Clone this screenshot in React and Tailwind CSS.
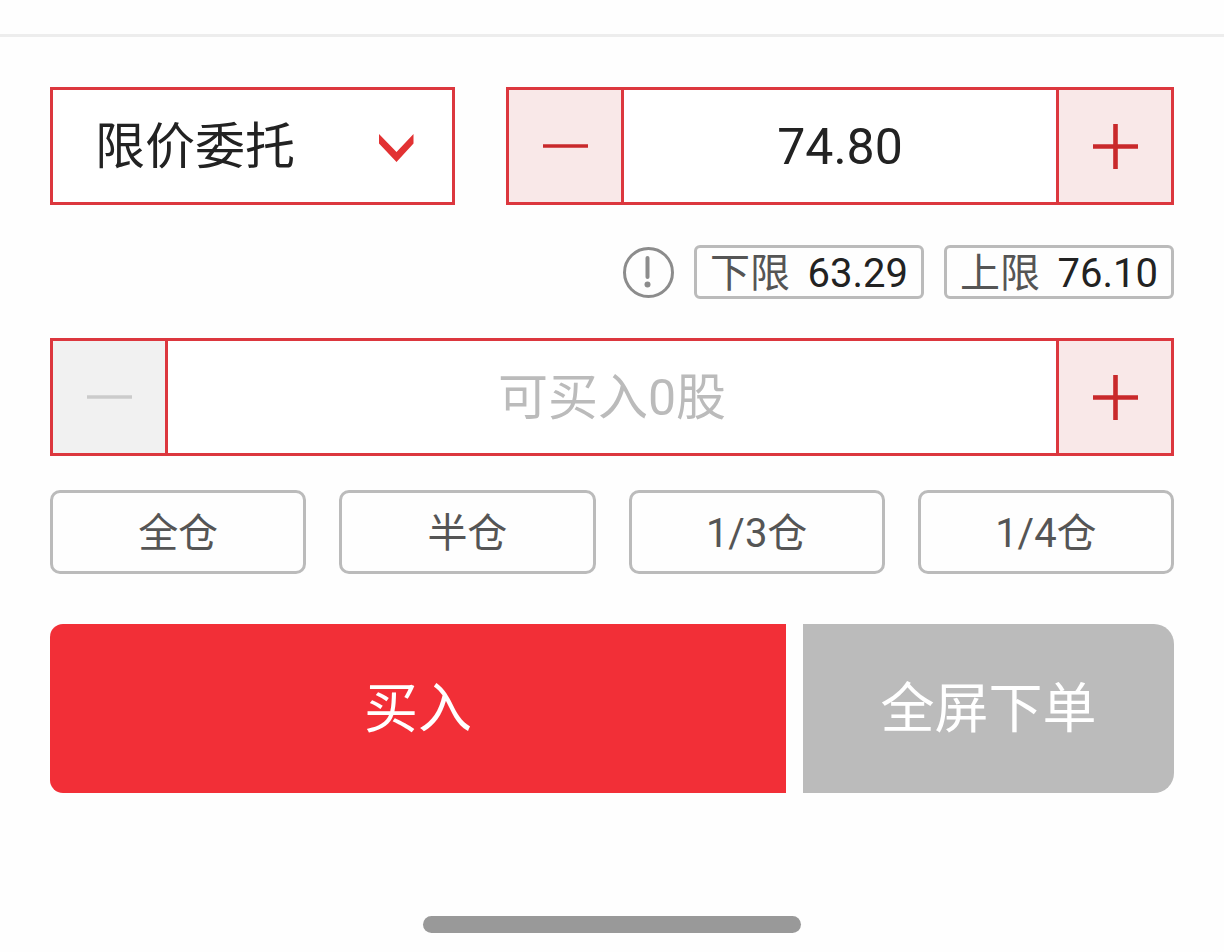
import React, { useState } from 'react';

const fractions = ['全仓', '半仓', '1/3仓', '1/4仓'];

const MinusIcon = () => (
  <svg width="45" height="45" viewBox="0 0 45 45" aria-hidden="true">
    <path d="M0 22h45" stroke="currentColor" strokeWidth="3.6" />
  </svg>
);

const PlusIcon = () => (
  <svg width="45" height="45" viewBox="0 0 45 45" aria-hidden="true">
    <path d="M0 22.5h45M22.5 0v45" stroke="currentColor" strokeWidth="4.6" />
  </svg>
);

const Stepper = ({ label, value, placeholder, onChange, onStep, minusDisabled }) => (
  <div className="flex h-[118px] min-w-0 border-3 border-[#dc373e] bg-white">
    <button
      type="button"
      aria-label={`${label}减少`}
      disabled={minusDisabled}
      onClick={() => onStep(-1)}
      className="flex w-[115px] shrink-0 items-center justify-center border-r-3 border-[#dc373e] bg-[#f9e8e8] text-[#c9292b] disabled:bg-[#f1f1f1] disabled:text-[#cbcbcb]"
    >
      <MinusIcon />
    </button>
    <input
      type="text"
      aria-label={label}
      value={value}
      placeholder={placeholder}
      onChange={(e) => onChange(e.target.value)}
      className="min-w-0 flex-1 pt-0.5 text-center text-[50px] text-[#222] outline-none placeholder:text-[#bbb]"
    />
    <button
      type="button"
      aria-label={`${label}增加`}
      onClick={() => onStep(1)}
      className="flex w-[115px] shrink-0 items-center justify-center border-l-3 border-[#dc373e] bg-[#f9e8e8] text-[#c9292b]"
    >
      <PlusIcon />
    </button>
  </div>
);

const LimitButton = ({ label, value, onClick }) => (
  <button
    type="button"
    onClick={onClick}
    className="flex h-[54px] w-[230px] items-baseline justify-between rounded-md border-3 border-[#bbb] px-[13px] pt-1.5 text-[40px] leading-none"
  >
    <span className="text-[#555]">{label}</span>
    <span className="text-[#222]">{value}</span>
  </button>
);

const App = () => {
  const [price, setPrice] = useState('74.80');
  const [amount, setAmount] = useState('');

  const stepPrice = (dir) => setPrice((Number(price) + dir * 0.01).toFixed(2));
  const stepAmount = (dir) => setAmount(String(Math.max(0, Number(amount) + dir * 100)));

  return (
    <div className="min-h-screen bg-[#fefefe] pt-[34px] font-[Roboto,'Noto_Sans_CJK_SC',sans-serif]">
      <main className="border-t-3 border-[#ededed] px-[50px] pt-[50px]">
        <div className="grid grid-cols-[405fr_668fr] gap-[51px]">
          <div className="relative">
            <select
              aria-label="委托方式"
              className="h-[118px] w-full appearance-none border-3 border-[#dc373e] bg-white pt-0.5 pl-[42px] text-[50px] text-[#222] outline-none"
            >
              <option>限价委托</option>
            </select>
            <svg
              className="pointer-events-none absolute top-[47px] right-[41px]"
              width="35"
              height="28"
              viewBox="0 0 35 28"
              aria-hidden="true"
            >
              <path d="M0 0 17.5 18 34.5 0V9.500L17.500 28 0 9.500z" fill="#e23233" />
            </svg>
          </div>
          <Stepper label="价格" value={price} onChange={setPrice} onStep={stepPrice} />
        </div>

        <div className="mt-10 flex items-center justify-end gap-5">
          <button type="button" aria-label="涨跌停说明">
            <svg width="51" height="51" viewBox="0 0 51 51" aria-hidden="true">
              <circle cx="25.500" cy="25.500" r="24" fill="none" stroke="#8c8c8c" strokeWidth="3" />
              <path d="M24.500 11v19" stroke="#8c8c8c" strokeWidth="4" strokeLinecap="round" />
              <circle cx="24.500" cy="37.500" r="3" fill="#8c8c8c" />
            </svg>
          </button>
          <LimitButton label="下限" value="63.29" onClick={() => setPrice('63.29')} />
          <LimitButton label="上限" value="76.10" onClick={() => setPrice('76.10')} />
        </div>

        <div className="mt-[39px]">
          <Stepper
            label="数量"
            value={amount}
            placeholder="可买入0股"
            onChange={setAmount}
            onStep={stepAmount}
            minusDisabled={!Number(amount)}
          />
        </div>

        <div className="mt-[34px] grid grid-cols-4 gap-[33px]">
          {fractions.map((text) => (
            <button
              key={text}
              type="button"
              className="flex h-[84px] items-center justify-center rounded-[10px] border-3 border-[#bbb] pt-1 text-[40px] leading-none text-[#555]"
            >
              {text}
            </button>
          ))}
        </div>

        <div className="mt-[50px] grid grid-cols-[736fr_371fr] gap-[17px] text-[54px] leading-none text-white">
          <button type="button" className="h-[169px] rounded-l-[13px] bg-[#f22f37] pt-0.5">
            买入
          </button>
          <button type="button" className="h-[169px] rounded-r-[20px] bg-[#bbb] pt-0.5">
            全屏下单
          </button>
        </div>
      </main>

      <div className="mx-auto mt-[123px] h-[17px] w-[378px] rounded-full bg-[#999]" />
    </div>
  );
};

export default App;
